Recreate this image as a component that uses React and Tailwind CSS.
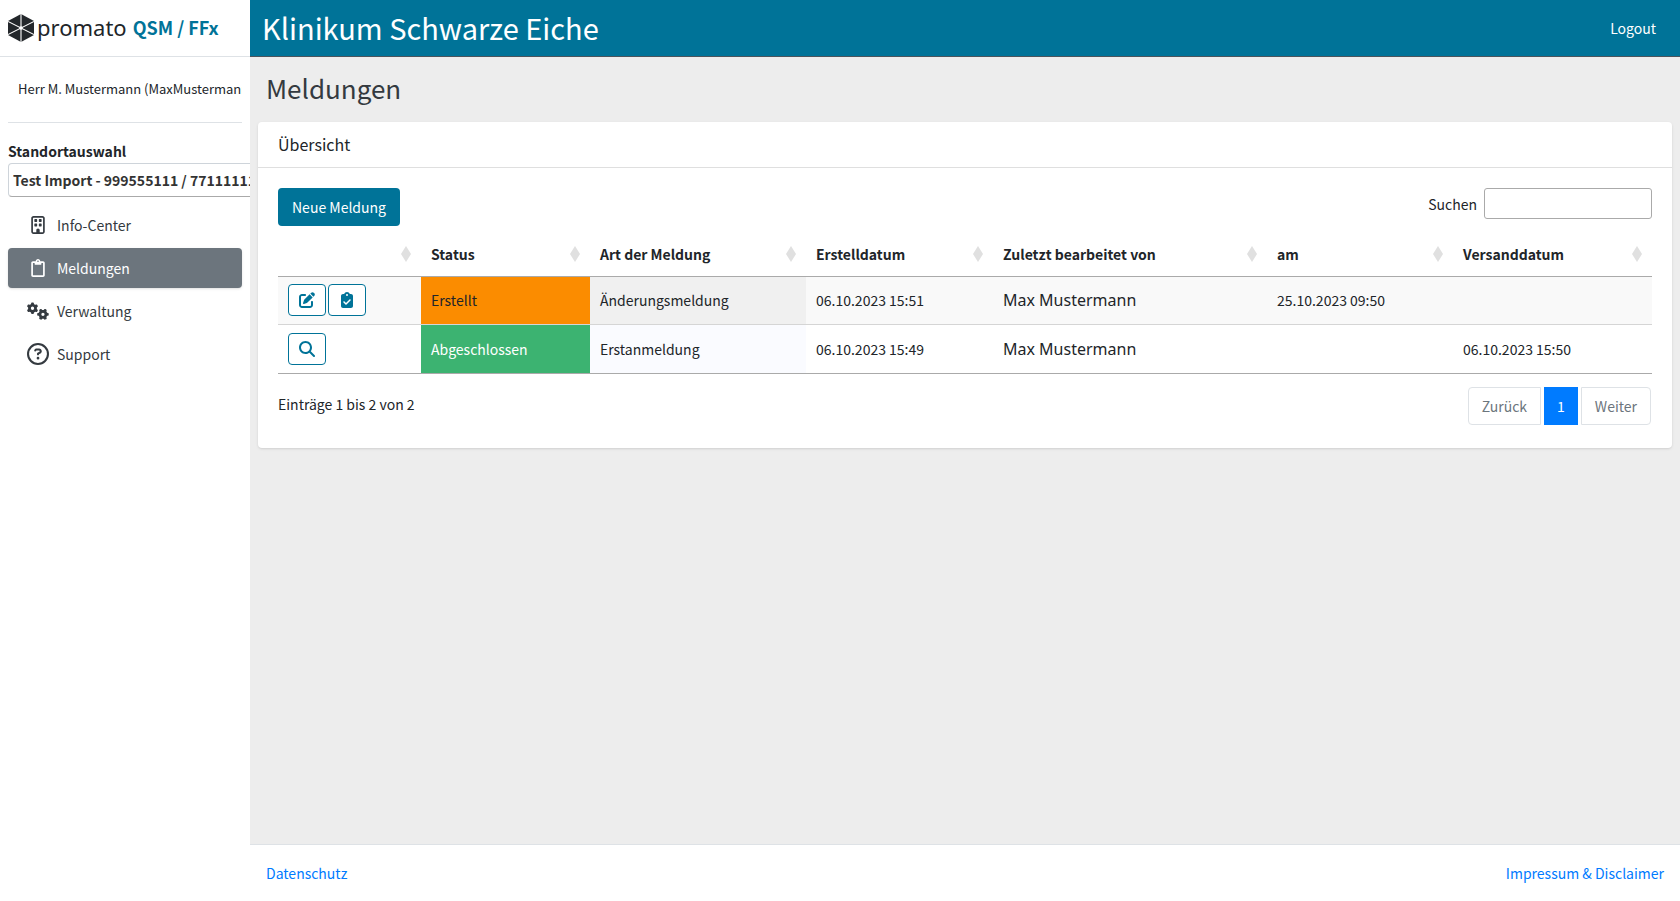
import React, { useState } from 'react';
import { FaRegClipboard } from 'react-icons/fa';
import {
  FaRegBuilding,
  FaGears,
  FaPenToSquare,
  FaClipboardCheck,
  FaMagnifyingGlass,
  FaRegCircleQuestion,
} from 'react-icons/fa6';

const Logo = () => (
  <svg viewBox="0 0 26 28" className="w-[26px] h-7 shrink-0" aria-hidden="true">
    <path d="M13 0L26 7V21L13 28L0 21V7Z" fill="#23272b" />
    <path d="M13 0V28M0 7.5L26 20.5M26 7.5L0 20.5" stroke="#fff" strokeWidth="1.1" />
    <circle cx="13" cy="14" r="1.8" fill="#fff" />
  </svg>
);

const SortIcon = () => (
  <svg viewBox="0 0 10 16" className="w-[10px] h-4 shrink-0" aria-hidden="true">
    <path d="M5 0L10 8L5 16L0 8Z" fill="#e0e0e0" />
  </svg>
);

const navItems = [
  { label: 'Info-Center', icon: <FaRegBuilding className="w-[18px] h-[18px]" /> },
  { label: 'Meldungen', icon: <FaRegClipboard className="w-[18px] h-[18px]" />, active: true },
  { label: 'Verwaltung', icon: <FaGears className="w-[22px] h-[18px]" /> },
  { label: 'Support', icon: <FaRegCircleQuestion className="w-[22px] h-[22px]" /> },
];

const columns = [
  { label: '', width: 'w-[143px]' },
  { label: 'Status', width: 'w-[169px]' },
  { label: 'Art der Meldung', width: 'w-[216px]' },
  { label: 'Erstelldatum', width: 'w-[187px]' },
  { label: 'Zuletzt bearbeitet von', width: 'w-[274px]' },
  { label: 'am', width: 'w-[186px]' },
  { label: 'Versanddatum', width: 'w-[199px]' },
];

const ActionButton = ({ label, children }) => (
  <button
    type="button"
    aria-label={label}
    className="flex h-8 w-[38px] items-center justify-center rounded border border-[#007398] bg-white text-[#007398]"
  >
    {children}
  </button>
);

function App() {
  const [search, setSearch] = useState('');

  return (
    <div className="flex min-h-screen bg-[#ededed] font-['Noto_Sans_CJK_SC','Noto_Sans',sans-serif] text-[14px] leading-6 text-[#212529]">
      <aside className="w-[250px] shrink-0 overflow-hidden bg-white">
        <a href="#" className="flex h-[57px] items-center border-b border-[#dee2e6] px-2">
          <Logo />
          <span className="ml-[3px] pb-[2px] font-['Noto_Sans',sans-serif] text-[22px]">promato</span>
          <span className="ml-[6px] pb-[2px] text-[18px] font-bold text-[#007398]">QSM / FFx</span>
        </a>

        <div className="px-2">
          <div className="flex h-[66px] items-center overflow-hidden border-b border-[#dee2e6] pb-[2px] pl-[10px] text-[13px] whitespace-nowrap">
            Herr M. Mustermann (MaxMustermann)
          </div>

          <label htmlFor="standort" className="mt-4 block font-bold">
            Standortauswahl
          </label>
          <select
            id="standort"
            className="block h-[34px] w-[300px] appearance-none rounded border border-[#ced4da] border-b-[#aaa] bg-white px-1 font-bold text-[#333]"
          >
            <option>Test Import - 999555111 / 771111111</option>
          </select>

          <nav className="mt-2 flex flex-col gap-[3px]">
            {navItems.map((item) => (
              <a
                key={item.label}
                href="#"
                className={
                  item.active
                    ? 'flex h-10 items-center rounded bg-[#6c757d] pl-4 text-white shadow'
                    : 'flex h-10 items-center rounded pl-4 text-[#343a40]'
                }
              >
                <span className="flex w-7 justify-center">{item.icon}</span>
                <span className="ml-[5px]">{item.label}</span>
              </a>
            ))}
          </nav>
        </div>
      </aside>

      <div className="flex min-w-0 flex-1 flex-col">
        <header className="flex h-[57px] items-center justify-between border-b border-[#4b545c] bg-[#007398] pr-6 pl-3 text-white">
          <span className="pb-[2px] text-[29px] leading-9">Klinikum Schwarze Eiche</span>
          <a href="#">Logout</a>
        </header>

        <main className="flex-1 px-2">
          <h1 className="flex h-[65px] items-center px-2 pb-1 text-[26px] text-[#343a40]">Meldungen</h1>

          <section className="rounded bg-white shadow">
            <h2 className="border-b border-[#dfdfdf] px-5 pt-[10px] pb-[11px] text-[16px]">Übersicht</h2>

            <div className="p-5">
              <div className="flex items-start justify-between">
                <button type="button" className="h-[38px] rounded bg-[#007398] px-[14px] text-white">
                  Neue Meldung
                </button>
                <label className="flex items-center gap-[7px]">
                  Suchen
                  <input
                    type="search"
                    value={search}
                    onChange={(e) => setSearch(e.target.value)}
                    className="h-[31px] w-[168px] rounded-[3px] border border-[#aaa] bg-white px-1"
                  />
                </label>
              </div>

              <table className="mt-[6px] w-full table-fixed border-collapse text-left">
                <thead>
                  <tr className="h-[44px] border-b border-[#aaa]">
                    {columns.map((col) => (
                      <th key={col.label} className={`${col.width} px-[10px] font-bold`}>
                        <div className="flex items-center justify-between">
                          <span>{col.label}</span>
                          <SortIcon />
                        </div>
                      </th>
                    ))}
                  </tr>
                </thead>
                <tbody>
                  <tr className="h-12 border-b border-[#d5d5d5] bg-[#f9f9f9]">
                    <td className="px-[10px]">
                      <div className="flex gap-[2px]">
                        <ActionButton label="Bearbeiten">
                          <FaPenToSquare className="h-4 w-4" />
                        </ActionButton>
                        <ActionButton label="Abschließen">
                          <FaClipboardCheck className="h-4 w-4" />
                        </ActionButton>
                      </div>
                    </td>
                    <td className="bg-[#fb8c00] px-[10px]">Erstellt</td>
                    <td className="bg-[#f0f0f0] px-[10px]">Änderungsmeldung</td>
                    <td className="px-[10px]">06.10.2023 15:51</td>
                    <td className="px-[10px] font-['Noto_Sans',sans-serif] text-[16px]">Max Mustermann</td>
                    <td className="px-[10px]">25.10.2023 09:50</td>
                    <td className="px-[10px]"></td>
                  </tr>
                  <tr className="h-[49px] border-b border-[#aaa]">
                    <td className="px-[10px]">
                      <ActionButton label="Ansehen">
                        <FaMagnifyingGlass className="h-4 w-4" />
                      </ActionButton>
                    </td>
                    <td className="bg-[#3cb371] px-[10px] text-white">Abgeschlossen</td>
                    <td className="bg-[#fafbff] px-[10px]">Erstanmeldung</td>
                    <td className="px-[10px]">06.10.2023 15:49</td>
                    <td className="px-[10px] font-['Noto_Sans',sans-serif] text-[16px]">Max Mustermann</td>
                    <td className="px-[10px]"></td>
                    <td className="px-[10px]">06.10.2023 15:50</td>
                  </tr>
                </tbody>
              </table>

              <div className="mt-[13px] flex items-center justify-between pb-[3px]">
                <p className="pb-1">Einträge 1 bis 2 von 2</p>
                <div className="flex gap-[3px] pr-px">
                  <button type="button" className="h-[38px] rounded-l border border-[#dee2e6] px-[13px] text-[#6c757d]">
                    Zurück
                  </button>
                  <button type="button" className="h-[38px] bg-[#007bff] px-[13px] text-white">
                    1
                  </button>
                  <button type="button" className="h-[38px] rounded-r border border-[#dee2e6] px-[13px] text-[#6c757d]">
                    Weiter
                  </button>
                </div>
              </div>
            </div>
          </section>
        </main>

        <footer className="flex h-[57px] items-center justify-between border-t border-[#dee2e6] bg-white px-4 text-[#007bff]">
          <a href="#">Datenschutz</a>
          <a href="#">Impressum &amp; Disclaimer</a>
        </footer>
      </div>
    </div>
  );
}

export default App;
